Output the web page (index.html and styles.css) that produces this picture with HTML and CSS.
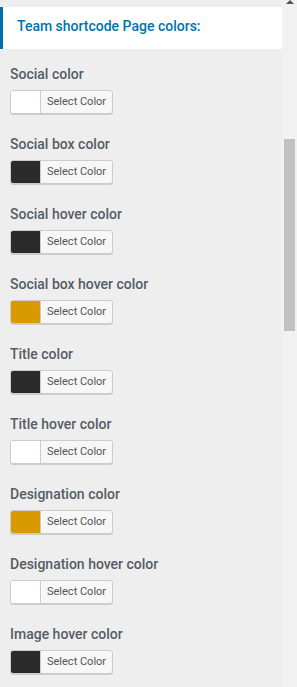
FILE: index.html
```html
<!DOCTYPE html>
<html lang="en">
<head>
  <meta charset="UTF-8">
  <title>Team shortcode Page colors</title>
  <link rel="stylesheet" href="styles.css">
</head>
<body>
  <div class="screen">
    <div class="panel">
      <h3 class="section-title">Team shortcode Page colors:</h3>

      <div class="fields">
        <div class="field">
          <label>Social color</label>
          <button class="color-result"><span class="swatch" style="background:#ffffff"></span><span class="text">Select Color</span></button>
        </div>
        <div class="field">
          <label>Social box color</label>
          <button class="color-result"><span class="swatch" style="background:#2b2b2b"></span><span class="text">Select Color</span></button>
        </div>
        <div class="field">
          <label>Social hover color</label>
          <button class="color-result"><span class="swatch" style="background:#2b2b2b"></span><span class="text">Select Color</span></button>
        </div>
        <div class="field">
          <label>Social box hover color</label>
          <button class="color-result"><span class="swatch" style="background:#d99a00"></span><span class="text">Select Color</span></button>
        </div>
        <div class="field">
          <label>Title color</label>
          <button class="color-result"><span class="swatch" style="background:#2b2b2b"></span><span class="text">Select Color</span></button>
        </div>
        <div class="field">
          <label>Title hover color</label>
          <button class="color-result"><span class="swatch" style="background:#ffffff"></span><span class="text">Select Color</span></button>
        </div>
        <div class="field">
          <label>Designation color</label>
          <button class="color-result"><span class="swatch" style="background:#d99a00"></span><span class="text">Select Color</span></button>
        </div>
        <div class="field">
          <label>Designation hover color</label>
          <button class="color-result"><span class="swatch" style="background:#ffffff"></span><span class="text">Select Color</span></button>
        </div>
        <div class="field">
          <label>Image hover color</label>
          <button class="color-result"><span class="swatch" style="background:#2b2b2b"></span><span class="text">Select Color</span></button>
        </div>
      </div>
    </div>

    <div class="scrollbar">
      <div class="arrow-up"></div>
      <div class="thumb"></div>
    </div>
  </div>
</body>
</html>
```

FILE: styles.css
```css
* {
  box-sizing: border-box;
}

body {
  margin: 0;
  font-family: Roboto, "Liberation Sans", sans-serif;
  background: #eeeeee;
}

.screen {
  display: flex;
  width: 297px;
  height: 687px;
  overflow: hidden;
}

.panel {
  width: 282px;
  background: #eeeeee;
  padding-top: 7px;
}

.section-title {
  margin: 0;
  height: 42px;
  background: #fff;
  border-left: 3px solid #0073aa;
  padding: 0 0 0 14px;
  font-size: 14px;
  font-weight: 500;
  line-height: 38px;
  color: #0073aa;
}

.fields {
  padding: 15px 10px 0;
}

.field {
  margin-bottom: 20px;
}

.field label {
  display: block;
  font-size: 14px;
  font-weight: 500;
  line-height: 20px;
  color: #555d66;
  margin-bottom: 6px;
}

.color-result {
  display: flex;
  align-items: stretch;
  height: 24px;
  padding: 0;
  margin: 0;
  border: 1px solid #ccc;
  border-radius: 3px;
  background: #f7f7f7;
  box-shadow: 0 1px 0 #ccc;
  overflow: hidden;
  cursor: pointer;
  font-family: Roboto, "Liberation Sans", sans-serif;
}

.swatch {
  width: 30px;
  border-right: 1px solid #ccc;
}

.text {
  padding: 0 6px;
  font-size: 11px;
  line-height: 22px;
  color: #555;
}

.scrollbar {
  width: 15px;
  background: #f1f1f1;
  display: flex;
  flex-direction: column;
  align-items: center;
}

.arrow-up {
  width: 0;
  height: 0;
  border-left: 4px solid transparent;
  border-right: 4px solid transparent;
  border-bottom: 4px solid #505050;
}

.thumb {
  width: 11px;
  height: 192px;
  margin-top: 135px;
  background: #c1c1c1;
}
```
